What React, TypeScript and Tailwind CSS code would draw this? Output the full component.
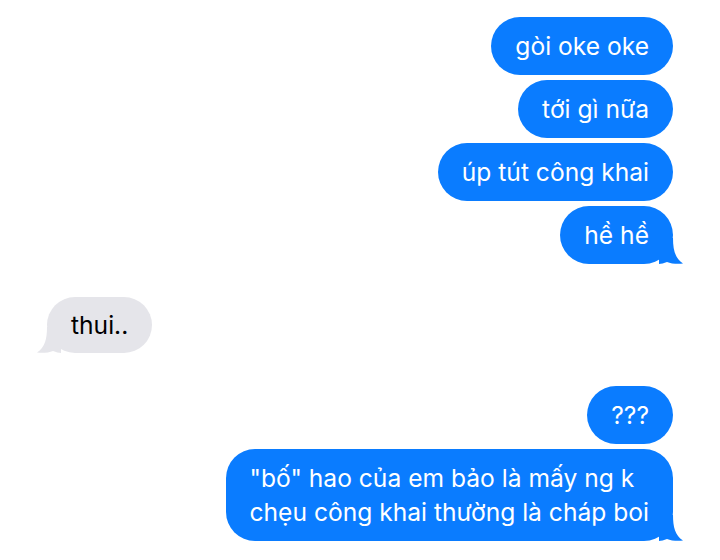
import React from "react";

function SentTail() {
  return (
    <svg
      className="absolute bottom-0 right-[-10px]"
      width="24"
      height="26"
      viewBox="0 0 24 26"
    >
      <path
        d="M0 0 L14 0 C14 12 16 20 24 25.6 C18 26.3 12 25.6 8 24 C5 25.3 2 25.8 0 26 Z"
        fill="#0a7cff"
      />
    </svg>
  );
}

function RecvTail() {
  return (
    <svg
      className="absolute bottom-0 left-[-10px]"
      width="24"
      height="26"
      viewBox="0 0 24 26"
    >
      <path
        d="M24 0 L10 0 C10 12 8 20 0 25.6 C6 26.3 12 25.6 16 24 C19 25.3 22 25.8 24 26 Z"
        fill="#e5e5ea"
      />
    </svg>
  );
}

function Sent({ children, tail }: { children: React.ReactNode; tail?: boolean }) {
  return (
    <div className="relative rounded-[29px] bg-[#0a7cff] px-[24px] py-[12px] text-white text-[24.6px] leading-[34px]">
      <span className="relative z-10">{children}</span>
      {tail && <SentTail />}
    </div>
  );
}

export default function App() {
  return (
    <div
      className="w-[720px] h-[560px] bg-white overflow-hidden px-[47px] pt-[17px]"
      style={{ fontFamily: "Inter, 'Noto Sans', sans-serif" }}
    >
      <div className="flex flex-col items-end gap-[5px]">
        <Sent>gòi oke oke</Sent>
        <Sent>tới gì nữa</Sent>
        <Sent>úp tút công khai</Sent>
        <Sent tail>hề hề</Sent>
      </div>
      <div className="mt-[33px] flex">
        <div className="relative rounded-[29px] bg-[#e5e5ea] px-[24px] py-[11px] text-black text-[24.6px] leading-[34px]">
          <span className="relative z-10">thui..</span>
          <RecvTail />
        </div>
      </div>
      <div className="mt-[33px] flex flex-col items-end gap-[5px]">
        <Sent>???</Sent>
        <Sent tail>
          "bố" hao của em bảo là mấy ng k
          <br />
          chẹu công khai thường là cháp boi
        </Sent>
      </div>
    </div>
  );
}
